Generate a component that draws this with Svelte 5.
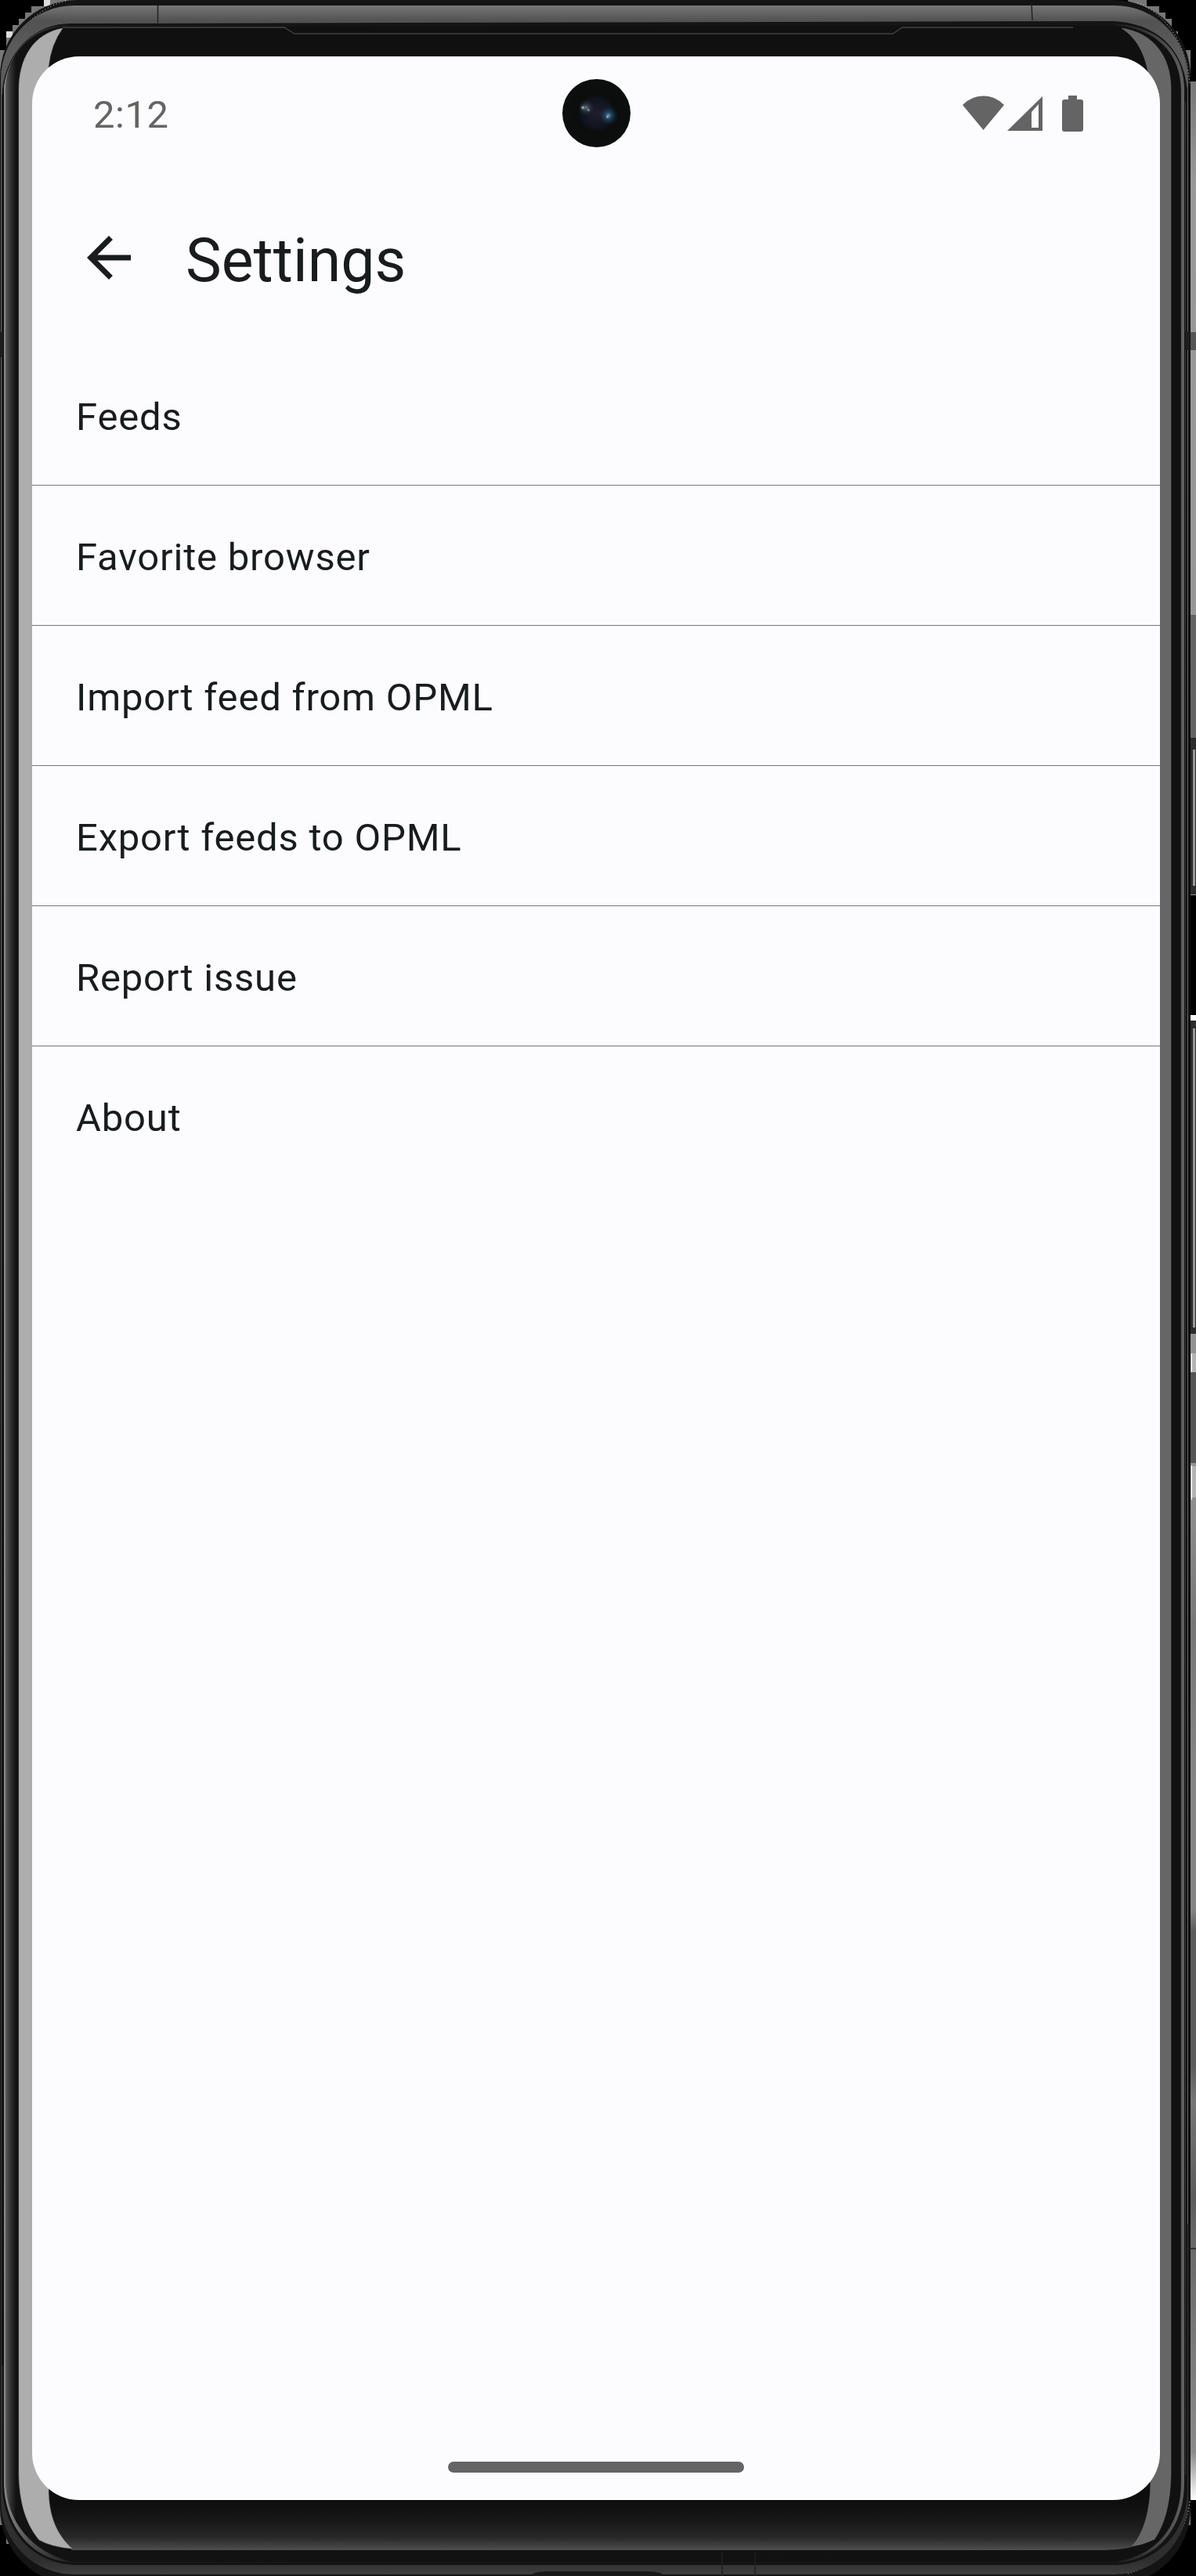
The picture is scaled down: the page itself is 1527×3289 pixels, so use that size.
<script lang="ts">
  const items = ['Feeds', 'Favorite browser', 'Import feed from OPML', 'Export feeds to OPML', 'Report issue', 'About'];
</script>

<div class="device">
  <svg class="frame" viewBox="0 0 1527 3289" aria-hidden="true">
    <defs>
      <linearGradient id="metal" x1="0" y1="0" x2="0" y2="3289" gradientUnits="userSpaceOnUse">
        <stop offset=".002" stop-color="#777" />
        <stop offset=".008" stop-color="#525252" />
        <stop offset=".02" stop-color="#5c5c5c" />
        <stop offset=".3" stop-color="#5c5c5c" />
        <stop offset=".7" stop-color="#383838" />
        <stop offset=".994" stop-color="#2e2e2e" />
        <stop offset="1" stop-color="#404040" />
      </linearGradient>
      <linearGradient id="chin" x1="0" y1="3192" x2="0" y2="3256" gradientUnits="userSpaceOnUse">
        <stop offset="0" stop-color="#0e0e0e" />
        <stop offset=".35" stop-color="#151515" />
        <stop offset=".75" stop-color="#282828" />
        <stop offset="1" stop-color="#4e4e4e" />
      </linearGradient>
      <linearGradient id="shade" x1="7" y1="0" x2="1515" y2="0" gradientUnits="userSpaceOnUse">
        <stop offset="0" stop-color="#5c5c5c" />
        <stop offset=".004" stop-color="#333" />
        <stop offset=".009" stop-color="#121212" />
        <stop offset=".994" stop-color="#111" />
        <stop offset="1" stop-color="#2a2a2a" />
      </linearGradient>
      <linearGradient id="ring" x1="5" y1="0" x2="1512" y2="0" gradientUnits="userSpaceOnUse">
        <stop offset="0" stop-color="#8a8a8a" />
        <stop offset=".02" stop-color="#555" />
        <stop offset=".06" stop-color="#161616" />
        <stop offset=".94" stop-color="#161616" />
        <stop offset="1" stop-color="#606060" />
      </linearGradient>
      <linearGradient id="right" x1="0" y1="104" x2="0" y2="3192" gradientUnits="userSpaceOnUse">
        <stop offset="0" stop-color="#777" />
        <stop offset=".04" stop-color="#999" />
        <stop offset=".58" stop-color="#929292" />
        <stop offset=".64" stop-color="#777" />
        <stop offset=".7" stop-color="#858585" />
        <stop offset=".756" stop-color="#858585" />
        <stop offset=".765" stop-color="#5c5c5c" />
        <stop offset=".82" stop-color="#5c5c5c" />
        <stop offset=".835" stop-color="#777" />
        <stop offset=".875" stop-color="#5c5c5c" />
        <stop offset=".9" stop-color="#6c6c6c" />
        <stop offset=".98" stop-color="#8a8a8a" />
        <stop offset="1" stop-color="#fff" />
      </linearGradient>
      <radialGradient id="lens">
        <stop offset="0" stop-color="#211c2c" />
        <stop offset=".4" stop-color="#111520" />
        <stop offset=".55" stop-color="#0b0d0d" />
        <stop offset="1" stop-color="#0c0f0e" />
      </radialGradient>
      <radialGradient id="glint">
        <stop offset="0" stop-color="#e5f4ff" />
        <stop offset=".35" stop-color="#6c8490" stop-opacity=".8" />
        <stop offset="1" stop-color="#344454" stop-opacity="0" />
      </radialGradient>
      <radialGradient id="blue">
        <stop offset="0" stop-color="#b8ecff" />
        <stop offset=".25" stop-color="#2e678b" />
        <stop offset="1" stop-color="#0b2440" stop-opacity="0" />
      </radialGradient>
    </defs>
    <rect width="1527" height="3289" fill="#000" />

    <!-- stepped fringe outside the four corners -->
    <path fill="#777" d="M100 0H56V8H40v8h-8v8h-8v8h-8v8H8v24H0v40h60zM1440 0h24v8h16v8h8v8h8v16h8v24h16v40h-60zM0 3180h60l50 109H56v-9H40v-8h-8v-8h-8v-8h-8v-8H8v-24H0zM1520 3200v24h-8v16h-8v16h-8v8h-8v8h-16v8h-16v9h-28l20-89z" />
    <path fill="#ddd" d="M56 0h8v8h-8zM8 40h8v8H8zM1480 3264h8v8h-8z" />

    <!-- side rail and buttons -->
    <path fill="url(#right)" d="M1519 104h8v3088h-8z" />
    <path fill="#555" d="M1519 424h8v23h-8zM1519 1752h8v116h-8z" />
    <path fill="#646464" d="M1519 785h8v157h-8z" />
    <path fill="#2c2c2c" d="M1519 942h8v200h-8zM1519 1303h8v400h-8z" />
    <path fill="#999" d="M1523 957h3v174h-3zM1523 1313h3v382h-3z" />
    <path fill="#000" d="M1519 1143h8v153h-8z" />
    <path fill="#fff" d="M1519 1296h8v7h-8z" />
    <path fill="#b4b4b4" d="M1520 1728h7v24h-7zM1520 1872h7v40h-7z" />
    <path fill="#fff" d="M1521 1728h1v24h-1zM1521 1871h1v44h-1z" />

    <!-- metal body -->
    <rect width="1520" height="3300" rx="98" fill="#141414" />
    <path fill="none" stroke="#e5e5e5" stroke-dasharray="1 3" d="M84 1C48 10 10 45 2 92M1452 3c35 15 63 50 67 105M3 3205c12 42 40 70 80 81M1519 3194c-5 45-35 80-82 93" />
    <rect x="1" y="7" width="1516" height="3280" rx="94" fill="url(#metal)" />
    <path fill="#141414" d="M90 30C45 30 9 64 3 114V3180C8 3240 48 3275 100 3275H1420C1475 3275 1516 3235 1516 3180V114C1510 60 1475 29 1420 27Z" />
    <path fill="url(#ring)" d="M90 32C42 32 12 65 5 110V3168C5 3226 42 3271 96 3272H1420C1472 3272 1512 3232 1512 3170V110C1510 65 1478 32 1420 30Z" />
    <path fill="url(#shade)" d="M90 33C45 33 7 65 7 116V3168C8 3222 43 3259 92 3271H1420C1470 3267 1508 3230 1508 3170V116C1508 68 1476 35 1420 32Z" />
    <path stroke="#383838" d="M90 3276.500H1430" />
    <path stroke="#333" d="M1513.500 130V3160" />
    <path stroke="#6b6460" d="M1516.500 130V2840" />
    <path stroke="#0b0b0b" d="M3.500 120V3020M1518.500 110V2840" stroke-width="2" />
    <path fill="#1e1e1e" d="M1513 423h6v24h-6zM0 424h4v32H0z" />
    <path stroke="#222" stroke-width="1.500" d="M201.500 7v22M1317 4l1 22M922 3259v30M964 3259v30M0 2845h4M0 2876h4M1513 2871h14" />
    <path fill="#171717" d="M680 3286q8-3 20-3h125q13 0 20 3v3H680z" />

    <!-- glass -->
    <path fill="#101010" d="M80 35H1432C1475 43 1495 75 1495 116V3153C1495 3220 1465 3255 1415 3256H92C35 3252 24 3210 24 3160V110C24 65 45 40 80 35Z" />
    <path fill="url(#chin)" d="M62 3177H1469C1468 3210 1462 3240 1445 3252Q1430 3256 1400 3256H92C70 3235 63 3210 62 3177Z" />
    <path fill="#adadad" stroke="#888" stroke-width=".5" d="M80 36C42 43 24 75 24 115V3160C25 3202 36 3226 50 3243Q66 3252 92 3254C73 3237 62 3213 62 3177V85Q65 57 80 36Z" />
    <path fill="#666" stroke="#7a7a7a" stroke-width=".5" d="M1432 36C1474 42 1495 74 1495 113V3153C1495 3195 1487 3223 1474 3242Q1460 3249 1445 3251C1460 3236 1469 3205 1469 3168V115C1466 75 1454 50 1432 36Z" />
    <path fill="none" stroke="#414141" stroke-width="1.300" d="M80 35H363L376 43H1140L1152 35H1370" />
  </svg>

  <main class="screen">
    <header class="status">
      <span class="time">2:12</span>
      <svg class="icons" viewBox="0 0 154 46" aria-hidden="true">
        <path d="M0 12Q11 .5 26.500 .5T53 12L26.500 44Z" />
        <path fill-rule="evenodd" d="M57 45 102 1v44ZM88 21v20h9V11Z" />
        <path d="M135 0h11v5h5q3 0 3 3v35q0 3-3 3h-21q-3 0-3-3V8q0-3 3-3h5Z" />
      </svg>
    </header>
    <div class="bar">
      <svg class="back" viewBox="0 0 24 24" aria-hidden="true"><path d="M20 11H7.830l5.590-5.590L12 4l-8 8 8 8 1.410-1.410L7.830 13H20v-2Z" /></svg>
      <h1>Settings</h1>
    </div>
    <ul>
      {#each items as item}
        <li>{item}</li>
      {/each}
    </ul>
    <div class="home"></div>
    <svg class="camera" viewBox="-43 -43 86 86" aria-hidden="true">
      <circle r="43" fill="url(#lens)" />
      <circle cx="15" cy="3" r="13" fill="url(#blue)" opacity=".7" />
      <circle cx="-13" cy="-7" r="10" fill="url(#glint)" opacity=".45" />
      <circle cx="-17" cy="-7" r="4" fill="url(#glint)" />
      <circle cx="-10" cy="-4" r="3" fill="url(#glint)" opacity=".8" />
      <circle cx="14" cy="4.500" r="3.500" fill="url(#glint)" />
    </svg>
  </main>
</div>

<style>
  :global(body) { background: #000; }
  .device { position: relative; width: 1527px; height: 3289px; box-sizing: border-box; padding: 72px 46px 97px 41px; overflow: hidden; }
  .frame { position: absolute; inset: 0; width: 100%; height: 100%; }
  .screen { position: relative; width: 1440px; height: 3120px; display: flex; flex-direction: column; background: #fcfcff; border-radius: 60px; color: #191c1d; font-family: Roboto, sans-serif; }
  .status { display: flex; justify-content: space-between; align-items: center; height: 148px; padding: 0 98px 0 78px; color: #646464; }
  .time { font-size: 49px; letter-spacing: .5px; }
  .icons { width: 154px; height: 46px; margin-top: -2px; fill: #646464; }
  .bar { display: flex; align-items: center; height: 221px; padding-left: 56px; }
  .back { width: 84px; height: 84px; margin-top: -3px; fill: #191c1d; }
  h1 { margin: 0 0 0 56px; padding-top: 5px; font-size: 77px; font-weight: 400; }
  ul { list-style: none; margin: 0; padding: 0; }
  li { height: 179px; box-sizing: border-box; padding: 3px 0 0 56px; font-size: 49px; line-height: 178px; letter-spacing: .8px; border-bottom: 1px solid #70787d; }
  li:last-child { border: 0; }
  .home { width: 378px; height: 14px; margin: auto auto 35px; border-radius: 7px; background: #646464; }
  .camera { position: absolute; left: 677px; top: 29px; width: 87px; height: 87px; }
</style>
